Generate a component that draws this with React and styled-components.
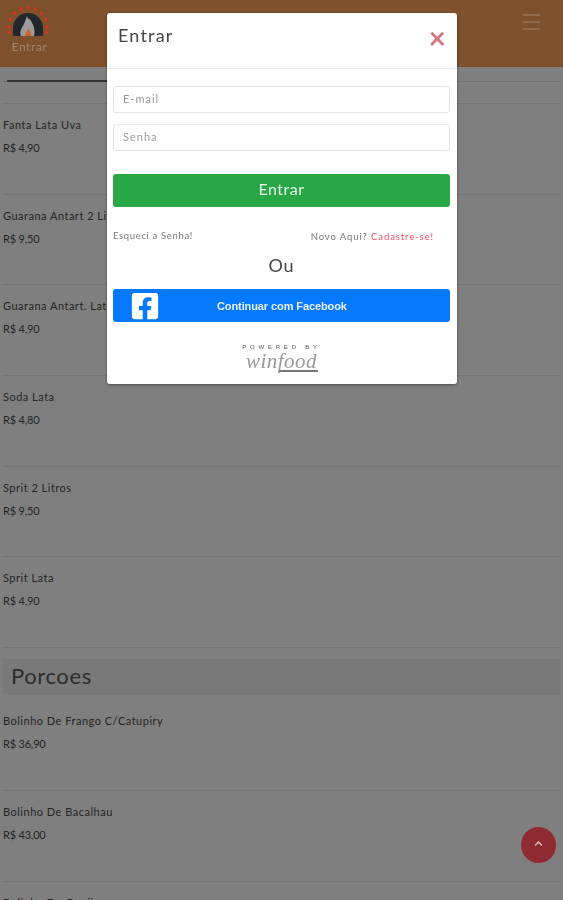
import React from "react";
import styled, { createGlobalStyle } from "styled-components";
import { FaFacebookSquare, FaChevronUp } from "react-icons/fa";

const GlobalStyle = createGlobalStyle`
  html, body {
    margin: 0;
    padding: 0;
    height: 100%;
    overflow: hidden;
    background: #fff;
    font-family: "Lato", "Open Sans", sans-serif;
  }
  * { box-sizing: border-box; }
`;

const drinks = [
  ["Fanta Lata Uva", "R$ 4,90"],
  ["Guarana Antart 2 Litros", "R$ 9,50"],
  ["Guarana Antart. Lata", "R$ 4,90"],
  ["Soda Lata", "R$ 4,80"],
  ["Sprit 2 Litros", "R$ 9,50"],
  ["Sprit Lata", "R$ 4,90"],
];

const portions = [
  ["Bolinho De Frango C/Catupiry", "R$ 36,90"],
  ["Bolinho De Bacalhau", "R$ 43,00"],
  ["Bolinho De Queijo", "R$ 36,90"],
];

function Logo() {
  const bricks = [];
  for (let i = 0; i <= 8; i++) {
    const a = Math.PI * (i / 8);
    bricks.push(
      <rect
        key={i}
        x={19.5 - Math.cos(a) * 19}
        y={20.5 - Math.sin(a) * 19.5}
        width="3"
        height="3"
        fill="#d0341c"
      />
    );
  }
  return (
    <svg width="42" height="32" viewBox="0 0 42 32">
      {bricks}
      <rect x="0.5" y="26" width="3" height="3" fill="#d0341c" />
      <rect x="38.5" y="26" width="3" height="3" fill="#d0341c" />
      <path d="M6 31V23a15 15 0 0 1 30 0v8z" fill="#23262a" />
      <path d="M14 31c-2-5 1-8 3-12 1-3 2-5 3-8 1 3 2 4 3 3 2 4 6 9 4 17z" fill="#9b9b9b" />
      <path d="M18 31c0-3 2-5 3-7 2 2 4 4 3 7z" fill="#c8642c" />
    </svg>
  );
}

function MenuItem({ item }) {
  return (
    <Row>
      <ItemName>{item[0]}</ItemName>
      <ItemPrice>{item[1]}</ItemPrice>
    </Row>
  );
}

export default function App() {
  return (
    <>
      <GlobalStyle />
      <Page>
        <Header>
          <Brand>
            <Logo />
            <BrandLabel>Entrar</BrandLabel>
          </Brand>
          <Burger>
            <span />
            <span />
            <span />
          </Burger>
        </Header>
        <Tabs>
          <ActiveTab />
        </Tabs>
        <List>
          {drinks.map((item) => (
            <MenuItem key={item[0]} item={item} />
          ))}
          <SectionTitle>Porcoes</SectionTitle>
          {portions.map((item) => (
            <MenuItem key={item[0]} item={item} />
          ))}
        </List>
      </Page>
      <Overlay>
        <Modal>
          <ModalHeader>
            <ModalTitle>Entrar</ModalTitle>
            <CloseButton>×</CloseButton>
          </ModalHeader>
          <ModalBody>
            <Input placeholder="E-mail" />
            <Input placeholder="Senha" />
            <SubmitButton>Entrar</SubmitButton>
            <LinksRow>
              <SmallText>Esqueci a Senha!</SmallText>
              <SmallText $low>
                Novo Aqui? <SignUp>Cadastre-se!</SignUp>
              </SmallText>
            </LinksRow>
            <OrText>Ou</OrText>
            <FacebookButton>
              <FaFacebookSquare />
              <span>Continuar com Facebook</span>
            </FacebookButton>
            <Powered>
              <PoweredBy>POWERED BY</PoweredBy>
              <Winfood>winfood</Winfood>
              <WinfoodBar />
            </Powered>
          </ModalBody>
        </Modal>
      </Overlay>
      <ScrollTop>
        <FaChevronUp />
      </ScrollTop>
    </>
  );
}

const Page = styled.div`
  height: 900px;
  overflow: hidden;
`;

const Header = styled.header`
  height: 67px;
  background: #ffa058;
  display: flex;
  justify-content: space-between;
  align-items: flex-start;
  padding: 5px 23px 0 7px;
`;

const Brand = styled.div`
  position: relative;
  z-index: 2;
  width: 42px;
  display: flex;
  flex-direction: column;
  align-items: center;
`;

const BrandLabel = styled.span`
  font-size: 12px;
  line-height: 14px;
  margin: 3px 0 0 3px;
  letter-spacing: 0.6px;
  color: #a08872;
  white-space: nowrap;
`;

const Burger = styled.div`
  position: relative;
  z-index: 2;
  width: 17px;
  margin-top: 9px;
  display: flex;
  flex-direction: column;
  gap: 5px;

  span {
    height: 2px;
    background: #8f6a4c;
  }
`;

const Tabs = styled.div`
  height: 15px;
  margin: 0 3px;
  border-bottom: 1px solid #e4e4e4;
  padding: 13px 4px 0;
`;

const ActiveTab = styled.div`
  width: 200px;
  height: 2px;
  background: #666;
`;

const List = styled.div`
  padding: 21px 3px 0;
`;

const Row = styled.div`
  height: 90.7px;
  padding-top: 14px;
  border-bottom: 1px solid #e8e8e8;

  &:first-child {
    height: 91.7px;
    border-top: 1px solid #e8e8e8;
  }
`;

const ItemName = styled.div`
  font-size: 11px;
  line-height: 14px;
  color: #4a4a4a;
  letter-spacing: 0.5px;
`;

const ItemPrice = styled.div`
  font-size: 11px;
  line-height: 14px;
  margin-top: 9px;
  color: #4a4a4a;
  letter-spacing: -0.2px;
`;

const SectionTitle = styled.h2`
  margin: 11px 0 5px;
  height: 36px;
  padding-left: 8px;
  background: #f2f2f2;
  font-size: 22px;
  line-height: 34px;
  font-weight: 400;
  letter-spacing: 0.6px;
  color: #5a5a5a;
`;

const Overlay = styled.div`
  position: fixed;
  z-index: 1;
  inset: 0;
  background: rgba(0, 0, 0, 0.5);
  padding-top: 13px;
`;

const Modal = styled.div`
  width: 350px;
  height: 371px;
  margin-left: 107px;
  background: #fff;
  border-radius: 3px;
  box-shadow: 0 1px 3px rgba(0, 0, 0, 0.4);
`;

const ModalHeader = styled.div`
  height: 56px;
  border-bottom: 1px solid #eee;
  display: flex;
  justify-content: space-between;
  align-items: flex-start;
  padding: 11px 11px 0 11px;
`;

const ModalTitle = styled.div`
  font-size: 18px;
  line-height: 22px;
  letter-spacing: 1.2px;
  color: #444;
`;

const CloseButton = styled.div`
  font-size: 30px;
  line-height: 30px;
  font-weight: 700;
  margin-top: -2px;
  color: #d9737f;
`;

const ModalBody = styled.div`
  padding: 17px 7px 0 6px;
  display: flex;
  flex-direction: column;
`;

const Input = styled.input`
  height: 27px;
  margin-bottom: 11px;
  padding: 0 9px 2px;
  border: 1px solid #e4e4e4;
  border-radius: 3px;
  font-family: inherit;
  font-size: 11px;
  letter-spacing: 1px;

  &::placeholder {
    color: #999;
  }
`;

const SubmitButton = styled.button`
  height: 33px;
  margin-top: 12px;
  padding: 0 0 4px;
  border: none;
  border-radius: 3px;
  background: #28a745;
  color: #e6f7ea;
  font-family: inherit;
  font-size: 16px;
  letter-spacing: 0.5px;
`;

const LinksRow = styled.div`
  display: flex;
  justify-content: space-between;
  padding-right: 16px;
  margin-top: 22px;
`;

const SmallText = styled.span`
  font-size: 9.5px;
  line-height: 14px;
  color: #777;
  letter-spacing: ${(p) => (p.$low ? "0.9px" : "0.65px")};
  margin-top: ${(p) => (p.$low ? "1px" : "0")};
`;

const SignUp = styled.span`
  color: #ea4c68;
`;

const OrText = styled.div`
  text-align: center;
  font-size: 18px;
  line-height: 22px;
  margin-top: 10px;
  color: #444;
  letter-spacing: 0.8px;
`;

const FacebookButton = styled.div`
  height: 33px;
  margin-top: 13px;
  border-radius: 3px;
  background: #0479fe;
  color: #e9f2ff;
  display: flex;
  align-items: center;
  padding-left: 17px;
  font-family: "Liberation Sans", sans-serif;
  font-size: 11px;
  font-weight: 700;
  letter-spacing: -0.1px;

  svg {
    width: 30px;
    height: 30px;
    flex: none;
    color: #fff;
  }

  span {
    margin-left: 57px;
  }
`;

const Powered = styled.div`
  width: 80px;
  margin: 22px auto 0;
  display: flex;
  flex-direction: column;
  align-items: center;
`;

const PoweredBy = styled.div`
  font-family: "Liberation Sans", sans-serif;
  font-size: 6px;
  line-height: 7px;
  letter-spacing: 3.8px;
  white-space: nowrap;
  color: #555;
`;

const Winfood = styled.div`
  font-family: "Liberation Serif", serif;
  font-style: italic;
  font-size: 21px;
  line-height: 17px;
  margin-top: 2px;
  letter-spacing: 0.5px;
  color: #999;
`;

const WinfoodBar = styled.div`
  align-self: flex-end;
  width: 39px;
  height: 2px;
  margin: 0 4px 0 0;
  background: #777;
`;

const ScrollTop = styled.div`
  position: fixed;
  z-index: 2;
  right: 7px;
  bottom: 37px;
  width: 35px;
  height: 36px;
  border-radius: 50%;
  background: #8f2b30;
  color: #d8c0c0;
  display: flex;
  align-items: center;
  justify-content: center;

  svg {
    width: 9px;
    height: 9px;
    margin-top: -4px;
  }
`;
